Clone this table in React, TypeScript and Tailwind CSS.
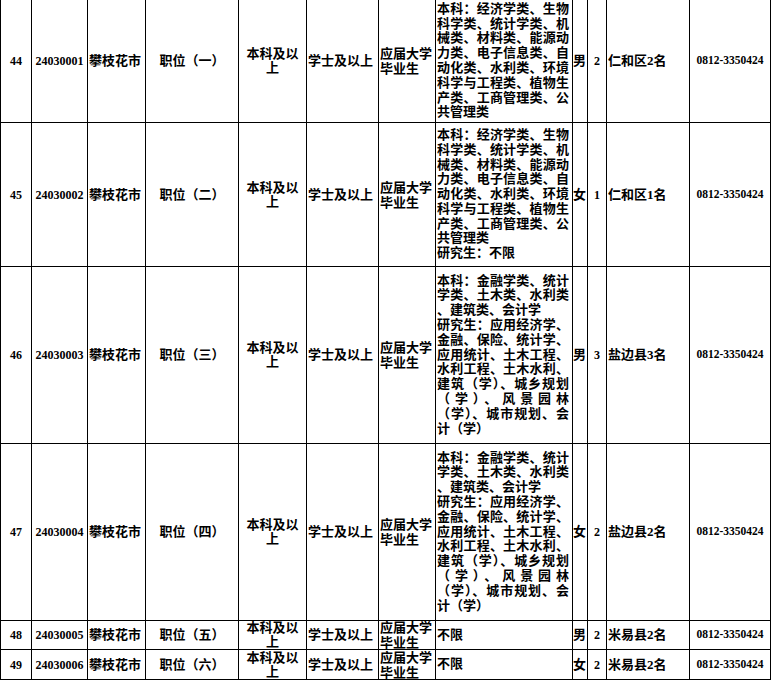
import React from "react";

type Row = {
  no: string;
  code: string;
  pos: string;
  majors: string[][];
  sex: string;
  count: string;
  place: string;
};

const bachelorA = [
  "本科：经济学类、生物",
  "科学类、统计学类、机",
  "械类、材料类、能源动",
  "力类、电子信息类、自",
  "动化类、水利类、环境",
  "科学与工程类、植物生",
  "产类、工商管理类、公",
  "共管理类",
];

const financeMajors = [
  ["本科：金融学类、统计", "学类、土木类、水利类", "、建筑类、会计学"],
  [
    "研究生：应用经济学、",
    "金融、保险、统计学、",
    "应用统计、土木工程、",
    "水利工程、土木水利、",
    "建筑（学）、城乡规划",
    "（学）、风景园林",
    "（学）、城市规划、会",
    "计（学）",
  ],
];

const rows: Row[] = [
  { no: "44", code: "24030001", pos: "职位（一）", majors: [bachelorA], sex: "男", count: "2", place: "仁和区2名" },
  { no: "45", code: "24030002", pos: "职位（二）", majors: [bachelorA, ["研究生：不限"]], sex: "女", count: "1", place: "仁和区1名" },
  { no: "46", code: "24030003", pos: "职位（三）", majors: financeMajors, sex: "男", count: "3", place: "盐边县3名" },
  { no: "47", code: "24030004", pos: "职位（四）", majors: financeMajors, sex: "女", count: "2", place: "盐边县2名" },
  { no: "48", code: "24030005", pos: "职位（五）", majors: [["不限"]], sex: "男", count: "2", place: "米易县2名" },
  { no: "49", code: "24030006", pos: "职位（六）", majors: [["不限"]], sex: "女", count: "2", place: "米易县2名" },
];

const cell = "bg-white overflow-hidden flex items-center";

function Majors({ paras }: { paras: string[][] }) {
  return (
    <div className="w-full">
      {paras.map((lines, p) =>
        lines.map((line, i) => (
          <div
            key={`${p}-${i}`}
            className={
              i < lines.length - 1
                ? "whitespace-nowrap text-justify [text-align-last:justify]"
                : "whitespace-nowrap"
            }
          >
            {line}
          </div>
        ))
      )}
    </div>
  );
}

export default function App() {
  return (
    <div className="min-h-screen bg-white font-['Liberation_Serif','Noto_Sans_CJK_SC',serif] font-bold text-black text-[13px]">
      <div className="grid w-fit grid-cols-[30px_55px_57px_92px_67px_71px_56px_136px_14px_18px_82px_80px] grid-rows-[122px_143px_176px_176px_28px_29px] gap-px bg-black px-px pb-px">
        {rows.map((r) => (
          <React.Fragment key={r.no}>
            <div className={`${cell} justify-center text-[12px]`}>{r.no}</div>
            <div className={`${cell} justify-center text-[12px]`}>{r.code}</div>
            <div className={`${cell} pl-px whitespace-nowrap`}>攀枝花市</div>
            <div className={`${cell} justify-center whitespace-nowrap`}>{r.pos}</div>
            <div className={`${cell} justify-center px-1 text-center leading-[14px]`}>本科及以上</div>
            <div className={`${cell} pl-px whitespace-nowrap`}>学士及以上</div>
            <div className={`${cell} pl-px leading-[15px]`}>应届大学毕业生</div>
            <div className={`${cell} pl-px pr-[3px] leading-[14.8px]`}>
              <Majors paras={r.majors} />
            </div>
            <div className={`${cell}`}>{r.sex}</div>
            <div className={`${cell} justify-center text-[12px]`}>{r.count}</div>
            <div className={`${cell} pl-px whitespace-nowrap`}>{r.place}</div>
            <div className={`${cell} justify-center text-[11.5px] whitespace-nowrap`}>0812-3350424</div>
          </React.Fragment>
        ))}
      </div>
    </div>
  );
}
